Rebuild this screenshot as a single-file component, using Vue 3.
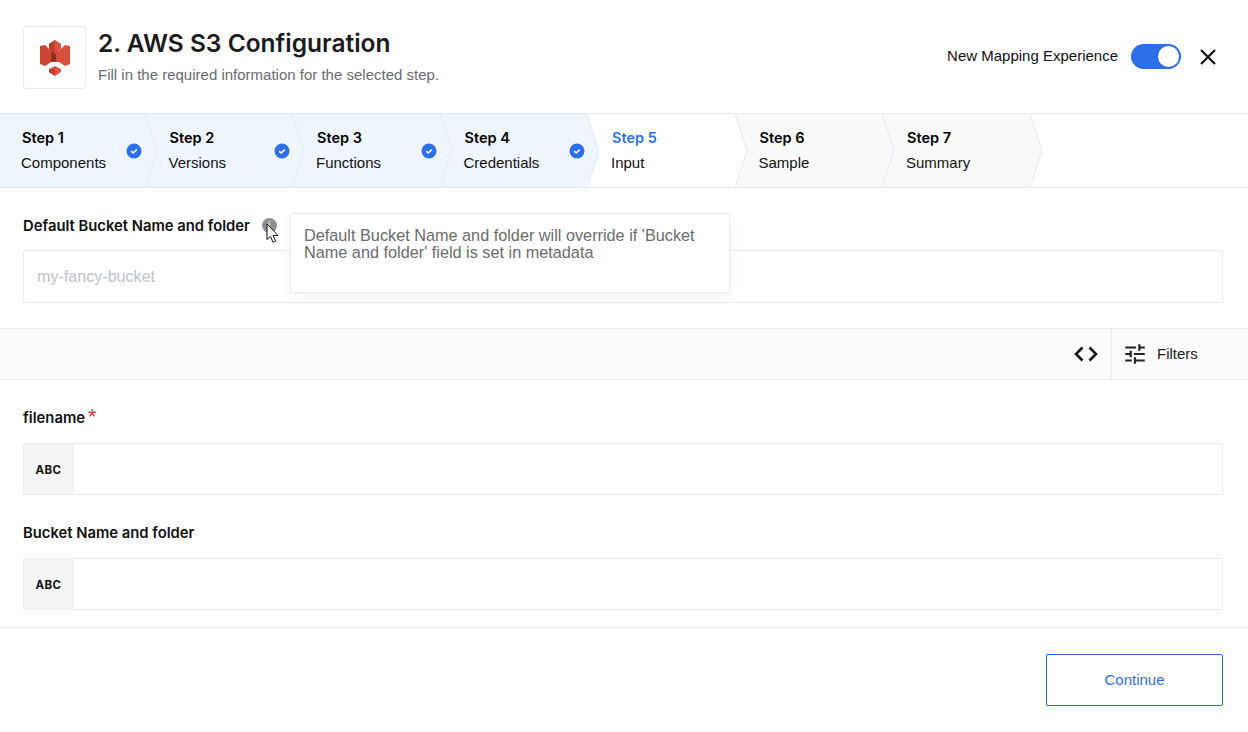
<template>
  <div class="page">
    <header class="head">
      <div class="logo">
        <svg width="30" height="36" viewBox="0 0 30 36">
          <path d="M0 6l5-1 6 6v11l-6 4-5-2z" fill="#c9452f" />
          <path d="M30 6l-5-1-6 6v11l6 4 5-2z" fill="#d94f3d" />
          <path d="M11 11h4v11h-4z" fill="#a9382a" />
          <path d="M15 11h4v11h-4z" fill="#d44b39" />
          <path d="M11 14h5v7h-5z" fill="#8c3123" />
          <path d="M9 4l6-4 6 4v6l-6 2-6-2z" fill="#dd5442" />
          <path d="M15 0v12l-6-2V4z" fill="#bd4130" />
          <path d="M9 29l6-3 6 3v3l-6 4-6-4z" fill="#dd5442" />
          <path d="M15 29v7l-6-4v-3z" fill="#bd4130" />
        </svg>
      </div>
      <div class="head-text">
        <h1>2. AWS S3 Configuration</h1>
        <p>Fill in the required information for the selected step.</p>
      </div>
      <div class="head-right">
        <span class="mapping">New Mapping Experience</span>
        <span class="toggle"><span class="knob"></span></span>
        <svg class="close" width="18" height="18" viewBox="0 0 18 18">
          <path d="M2 2l14 14M16 2L2 16" stroke="#111" stroke-width="2.200" fill="none" />
        </svg>
      </div>
    </header>

    <nav class="stepper">
      <div
        v-for="(s, i) in steps"
        :key="s.n"
        class="step"
        :class="s.state"
        :style="{ zIndex: 20 - i }"
      >
        <b>Step {{ s.n }}</b>
        <span>{{ s.name }}</span>
        <svg v-if="s.state === 'done'" class="check" width="16" height="16" viewBox="0 0 16 16">
          <circle cx="8" cy="8" r="7.500" fill="#2d6fe8" />
          <path d="M5.200 8.200l2 1.800 3.600-3.400" stroke="#fff" stroke-width="1.600" fill="none" />
        </svg>
        <svg class="arrow" width="13" height="74" viewBox="0 0 13 74">
          <path d="M0 0L12 37L0 74z" :fill="fills[s.state]" />
          <path d="M0 0L12 37L0 74" fill="none" stroke="#e2e9f6" stroke-width="1" />
        </svg>
      </div>
    </nav>

    <section class="bucket">
      <label class="bucket-label">
        Default Bucket Name and folder
        <span class="info">i</span>
      </label>
      <input class="text-input" placeholder="my-fancy-bucket" />
      <svg class="cursor" width="14" height="21" viewBox="0 0 14 21">
        <path d="M1 1v15.500l3.500-3.200 2.500 6 2.700-1.100-2.600-5.700h5z" fill="#fff" stroke="#111" stroke-width="1" />
      </svg>
      <div class="tip">Default Bucket Name and folder will override if 'Bucket Name and folder' field is set in metadata</div>
    </section>

    <div class="toolbar">
      <button class="code-btn">
        <svg width="24" height="16" viewBox="0 0 24 16">
          <path d="M8.500 1.500L2 8l6.500 6.500M15.500 1.500L22 8l-6.500 6.500" stroke="#111" stroke-width="2.600" fill="none" />
        </svg>
      </button>
      <button class="filter-btn">
        <svg width="26" height="26" viewBox="0 0 24 24">
          <path d="M3 17v2h6v-2H3zM3 5v2h10V5H3zm10 16v-2h8v-2h-8v-2h-2v6h2zM7 9v2H3v2h4v2h2V9H7zm14 4v-2H11v2h10zm-6-4h2V7h4V5h-4V3h-2v6z" fill="#222" />
        </svg>
        <span>Filters</span>
      </button>
    </div>

    <section class="fields">
      <div v-for="f in fields" :key="f.name" class="field">
        <label>{{ f.name }}<em v-if="f.required">*</em></label>
        <div class="typed-input">
          <span class="type">ABC</span>
          <input />
        </div>
      </div>
    </section>

    <footer class="foot">
      <button class="continue">Continue</button>
    </footer>
  </div>
</template>

<script setup>
const fills = { done: '#eff5fd', active: '#ffffff', todo: '#f9f9fa' }

const steps = [
  { n: 1, name: 'Components', state: 'done' },
  { n: 2, name: 'Versions', state: 'done' },
  { n: 3, name: 'Functions', state: 'done' },
  { n: 4, name: 'Credentials', state: 'done' },
  { n: 5, name: 'Input', state: 'active' },
  { n: 6, name: 'Sample', state: 'todo' },
  { n: 7, name: 'Summary', state: 'todo' }
]

const fields = [
  { name: 'filename', required: true },
  { name: 'Bucket Name and folder', required: false }
]
</script>

<style>
html, body { margin: 0; background: #fff; }
</style>

<style scoped>
.page {
  width: 1248px;
  height: 732px;
  overflow: hidden;
  font-family: "Liberation Sans", Arial, sans-serif;
  color: #111;
}

.head {
  display: flex;
  align-items: flex-start;
  height: 113px;
  box-sizing: content-box;
  padding: 0 31px 0 23px;
  border-bottom: 1px solid #e6e8ec;
}

.logo {
  width: 61px;
  height: 61px;
  margin: 26px 12px 0 0;
  border: 1px solid #ececec;
  border-radius: 3px;
  display: flex;
  align-items: center;
  justify-content: center;
}

.head-text { margin-top: 28px; }

.head-text h1 {
  margin: 0;
  font: 600 24.500px/30px Inter, sans-serif;
  color: #1b1b1d;
}

.head-text p {
  margin: 9px 0 0;
  font-size: 15px;
  line-height: 16px;
  color: #6b6b70;
}

.head-right {
  margin: 44px 0 0 auto;
  display: flex;
  align-items: center;
}

.mapping {
  margin-bottom: 2px;
  font-size: 15px;
  line-height: 22px;
}

.toggle {
  width: 50px;
  height: 25px;
  margin: 0 18px 0 13px;
  border-radius: 13px;
  background: #2d6fe8;
  display: flex;
  align-items: center;
  justify-content: flex-end;
  padding-right: 2px;
  box-sizing: border-box;
}

.knob {
  width: 21px;
  height: 21px;
  border-radius: 50%;
  background: #fff;
}

.stepper {
  display: flex;
  height: 73px;
  margin-left: -3px;
  border-bottom: 1px solid #e2e9f6;
}

.step {
  position: relative;
  width: 147.500px;
  box-sizing: border-box;
  padding: 15px 0 0 25px;
  display: flex;
  flex-direction: column;
}

.step.done { background: #eff5fd; }
.step.active { background: #fff; }
.step.todo { background: #f9f9fa; }

.step b {
  font: 600 14.500px/17px Inter, sans-serif;
  color: #000;
}

.step.active b { color: #2d6fe8; }

.step span {
  margin-top: 8px;
  margin-left: -1px;
  font-size: 15px;
  line-height: 17px;
}

.check {
  position: absolute;
  top: 29px;
  right: 2.500px;
}

.arrow {
  position: absolute;
  top: 0;
  left: 100%;
}

.bucket {
  position: relative;
  padding: 28px 25px 25px 23px;
  border-bottom: 1px solid #ececec;
}

.bucket-label {
  display: block;
  height: 34px;
  font: 600 14.800px/20px Inter, sans-serif;
  color: #111;
}

.info {
  display: inline-block;
  width: 15px;
  height: 15px;
  margin-left: 8px;
  border-radius: 50%;
  background: #8d8e93;
  color: #ddd;
  font: 700 10px/15px "Liberation Sans", sans-serif;
  text-align: center;
  vertical-align: 2px;
}

.text-input {
  display: block;
  width: 100%;
  height: 53px;
  box-sizing: border-box;
  padding: 0 13px;
  border: 1px solid #ececec;
  border-radius: 2px;
  font: 16.100px "Liberation Sans", sans-serif;
  outline: none;
}

.text-input::placeholder { color: #bcc3cc; }

.cursor {
  position: absolute;
  left: 266px;
  top: 35px;
  z-index: 3;
}

.tip {
  position: absolute;
  left: 290px;
  top: 25px;
  width: 440px;
  height: 80px;
  box-sizing: border-box;
  padding: 13px 13px;
  background: #fff;
  border: 1px solid #ececec;
  border-radius: 2px;
  box-shadow: 0 4px 14px rgba(0, 0, 0, 0.06);
  font-size: 16.250px;
  line-height: 17px;
  color: #6b6b6b;
  z-index: 2;
}

.toolbar {
  display: flex;
  justify-content: flex-end;
  height: 50px;
  background: #fbfbfb;
  border-bottom: 1px solid #ececec;
}

.toolbar button {
  border: 0;
  background: none;
  padding: 0;
  display: flex;
  align-items: center;
  font: 15px "Liberation Sans", sans-serif;
  color: #222;
}

.code-btn {
  width: 51px;
  justify-content: center;
  border-right: 1px solid #ececec !important;
}

.filter-btn {
  width: 136px;
  padding-left: 10px !important;
  gap: 9px;
}

.filter-btn span { margin-bottom: 2px; }

.fields {
  padding: 27px 25px 17px 23px;
  border-bottom: 1px solid #ececec;
}

.field + .field { margin-top: 27px; }

.field label {
  display: block;
  height: 26px;
  margin-bottom: 10px;
  font: 600 14.800px/22px Inter, sans-serif;
}

.field em {
  margin-left: 3px;
  font: 400 22px/0 "Liberation Sans", sans-serif;
  vertical-align: -1px;
  color: #f0384c;
}

.typed-input {
  display: flex;
  height: 52px;
  box-sizing: border-box;
  border: 1px solid #ececec;
  border-radius: 2px;
}

.type {
  width: 50px;
  background: #f5f5f5;
  border-right: 1px solid #ececec;
  display: flex;
  align-items: center;
  justify-content: center;
  font: 700 11.500px Inter, sans-serif;
  letter-spacing: 0.4px;
  padding-top: 2px;
  box-sizing: border-box;
}

.typed-input input {
  flex: 1;
  border: 0;
  outline: none;
}

.foot {
  display: flex;
  justify-content: flex-end;
  padding: 26px 25px;
}

.continue {
  width: 177px;
  height: 52px;
  padding: 0 0 2px;
  background: #fff;
  border: 1px solid #2d6fe8;
  border-radius: 2px;
  color: #2d6fe8;
  font: 15px "Liberation Sans", sans-serif;
}
</style>
